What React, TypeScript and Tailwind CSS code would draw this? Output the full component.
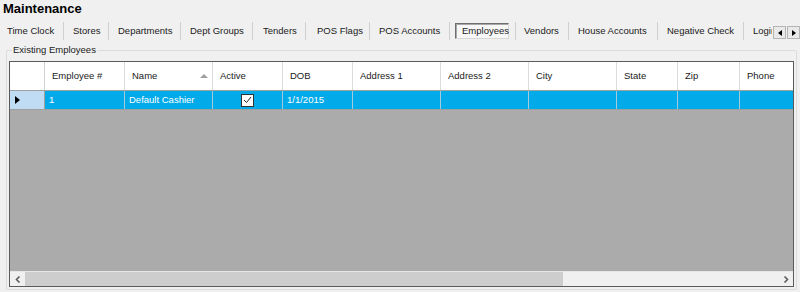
import React from "react";

const tabs = [
  { label: "Time Clock", w: "w-[63px]", pl: "pl-[7px]" },
  { label: "Stores", w: "w-[44px]", pl: "pl-[9px]" },
  { label: "Departments", w: "w-[71px]", pl: "pl-[9px]" },
  { label: "Dept Groups", w: "w-[71px]", pl: "pl-[9px]" },
  { label: "Tenders", w: "w-[52px]", pl: "pl-[10px]" },
  { label: "POS Flags", w: "w-[63px]", pl: "pl-[11px]" },
  { label: "POS Accounts", w: "w-[79px]", pl: "pl-[9px]" },
  { label: "Employees", w: "w-[65px]", pl: "pl-[5px]", selected: true },
  { label: "Vendors", w: "w-[52px]", pl: "pl-[8px]" },
  { label: "House Accounts", w: "w-[88px]", pl: "pl-[9px]" },
  { label: "Negative Check", w: "w-[85px]", pl: "pl-[9px]" },
  { label: "Login", w: "w-[80px]", pl: "pl-[9px]" },
];

const cols = [
  { label: "Employee #", w: "w-[80px]", value: "1" },
  { label: "Name", w: "w-[88px]", value: "Default Cashier", sort: true },
  { label: "Active", w: "w-[70px]", value: "", check: true },
  { label: "DOB", w: "w-[70px]", value: "1/1/2015" },
  { label: "Address 1", w: "w-[88px]", value: "" },
  { label: "Address 2", w: "w-[88px]", value: "" },
  { label: "City", w: "w-[88px]", value: "" },
  { label: "State", w: "w-[61px]", value: "" },
  { label: "Zip", w: "w-[62px]", value: "" },
  { label: "Phone", w: "w-[80px]", value: "" },
];

export default function App() {
  return (
    <div className="w-[800px] h-[292px] bg-[#f0f0f0] overflow-hidden relative font-['Liberation_Sans',Arial,sans-serif] text-[9.5px] text-[#1a1a1a]">
      <div className="h-[20px] pl-[3px] pt-[1px] font-bold text-[13px] leading-[15px] text-black">
        Maintenance
      </div>

      {/* Tab strip */}
      <div className="relative h-[22px] flex items-center overflow-hidden whitespace-nowrap">
        {tabs.map((t, i) => (
          <React.Fragment key={t.label}>
            <div className={`${t.w} ${t.pl} flex-none h-full flex items-center`}>
              {t.selected ? (
                <span className="h-[16px] w-[54px] flex items-center pl-[6px] border border-t-[#6e6e6e] border-l-[#6e6e6e] border-b-[#d8d8d8] border-r-[#d8d8d8] bg-[#f7f7f7] shadow-[inset_1px_1px_0_#a8a8a8]">
                  {t.label}
                </span>
              ) : (
                <span>{t.label}</span>
              )}
            </div>
            {i < tabs.length - 1 && <div className="flex-none w-px h-[18px] bg-[#cfcfcf]" />}
          </React.Fragment>
        ))}
        <div className="absolute right-0 top-[6px] flex gap-px bg-[#f0f0f0] pl-px">
          <div className="w-[13px] h-[13px] border border-[#b5b5b5] bg-[#e9e9e9] flex items-center justify-center">
            <svg width="4" height="6" viewBox="0 0 4 6"><path d="M4 0 L0 3 L4 6 Z" fill="#000" /></svg>
          </div>
          <div className="w-[13px] h-[13px] border border-[#b5b5b5] bg-[#e9e9e9] flex items-center justify-center">
            <svg width="4" height="6" viewBox="0 0 4 6"><path d="M0 0 L4 3 L0 6 Z" fill="#000" /></svg>
          </div>
        </div>
      </div>

      {/* Group box */}
      <div className="relative mt-[8px] ml-[6px] w-[791px] h-[240px] border border-[#dcdcdc] rounded-[2px]">
        <div className="absolute -top-[8px] left-[5px] px-[1px] bg-[#f0f0f0] leading-[14px]">
          Existing Employees
        </div>

        {/* Grid */}
        <div className="ml-[2px] mt-[10px] w-[785px] h-[226px] border border-[#5a5a5a] flex flex-col overflow-hidden">
          {/* Header */}
          <div className="h-[28px] flex bg-white whitespace-nowrap">
            <div className="w-[35px] flex-none border-r border-[#d0d0d0]" />
            {cols.map((c) => (
              <div
                key={c.label}
                className={`${c.w} flex-none border-r border-[#dcdcdc] flex items-center pl-[7px] pr-[3px] ${c.sort ? "justify-between" : ""}`}
              >
                <span>{c.label}</span>
                {c.sort && (
                  <svg width="8" height="4" viewBox="0 0 8 4" className="mr-[1px]">
                    <path d="M0 4 L4 0 L8 4 Z" fill="#a0a0a0" />
                  </svg>
                )}
              </div>
            ))}
          </div>
          <div className="h-px bg-[#a0a0a0]" />
          {/* Selected row */}
          <div className="h-[18px] flex whitespace-nowrap text-white">
            <div className="w-[35px] flex-none bg-[#bfdcf4] border-r border-[#a0a0a0] flex items-center pl-[5px]">
              <svg width="5" height="8" viewBox="0 0 5 8"><path d="M0 0 L5 4 L0 8 Z" fill="#000" /></svg>
            </div>
            {cols.map((c) => (
              <div
                key={c.label}
                className={`${c.w} flex-none bg-[#02aaea] border-r border-[#a3c9dc] flex items-center ${c.check ? "justify-center" : "pl-[4px]"}`}
              >
                {c.check ? (
                  <div className="w-[13px] h-[13px] bg-white border border-[#333] flex items-center justify-center">
                    <svg width="9" height="8" viewBox="0 0 9 8">
                      <path d="M1 4 L3.5 6.5 L8 1" stroke="#222" strokeWidth="1" fill="none" />
                    </svg>
                  </div>
                ) : (
                  <span>{c.value}</span>
                )}
              </div>
            ))}
          </div>
          <div className="h-px bg-[#a0a0a0]" />
          {/* Empty area */}
          <div className="flex-1 bg-[#ababab]" />
          {/* Horizontal scrollbar */}
          <div className="h-[15px] flex bg-[#f0f0f0] border-t border-[#e6e6e6]">
            <div className="w-[15px] flex-none flex items-center justify-center">
              <svg width="6" height="7" viewBox="0 0 6 7"><path d="M4.5 0.5 L1.5 3.5 L4.5 6.5" stroke="#606060" strokeWidth="1.6" fill="none" /></svg>
            </div>
            <div className="w-[538px] flex-none bg-[#cdcdcd]" />
            <div className="flex-1" />
            <div className="w-[15px] flex-none flex items-center justify-center">
              <svg width="6" height="7" viewBox="0 0 6 7"><path d="M1.5 0.5 L4.5 3.5 L1.5 6.5" stroke="#606060" strokeWidth="1.6" fill="none" /></svg>
            </div>
          </div>
        </div>
      </div>
    </div>
  );
}
